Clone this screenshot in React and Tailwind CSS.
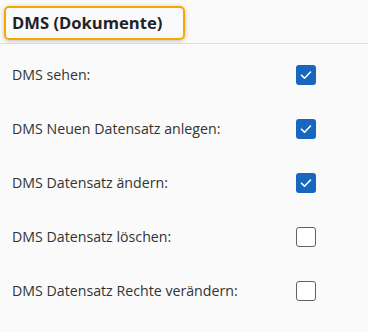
import React from "react";

const rechte = [
  { label: "DMS sehen:", checked: true },
  { label: "DMS Neuen Datensatz anlegen:", checked: true },
  { label: "DMS Datensatz ändern:", checked: true },
  { label: "DMS Datensatz löschen:", checked: false },
  { label: "DMS Datensatz Rechte verändern:", checked: false },
];

const Checkbox = ({ checked }) =>
  checked ? (
    <span className="flex h-[20px] w-[20px] items-center justify-center rounded-[3px] bg-[#1767c0]">
      <svg width="14" height="14" viewBox="0 0 14 14" fill="none">
        <path d="M2.5 7.2l3 3 6-6.2" stroke="white" strokeWidth="1.6" strokeLinecap="round" strokeLinejoin="round" />
      </svg>
    </span>
  ) : (
    <span className="block h-[20px] w-[20px] rounded-[3px] border-[1.5px] border-[#616161] bg-white" />
  );

export default function App() {
  return (
    <div className="h-[332px] w-[368px] bg-[#fafafa] text-[#333] font-['Open_Sans',sans-serif]">
      {/* Kopfzeile */}
      <div className="h-[44px] border-b border-[#e0e0e0] pt-[6px] pl-[4px]">
        <div className="flex h-[34px] w-[181px] items-center rounded-[5px] border-2 border-[#f5a800] pl-[6px] shadow-[0_1px_4px_rgba(0,0,0,0.25)]">
          <span className="text-[16.6px] font-bold text-[#1f2328]">DMS (Dokumente)</span>
        </div>
      </div>

      {/* Rechte */}
      <div className="pt-[4px]">
        {rechte.map((r) => (
          <div key={r.label} className="flex h-[54px] items-center">
            <div className="w-[296px] pl-[12px] text-[14.2px]">{r.label}</div>
            <Checkbox checked={r.checked} />
          </div>
        ))}
      </div>
    </div>
  );
}
